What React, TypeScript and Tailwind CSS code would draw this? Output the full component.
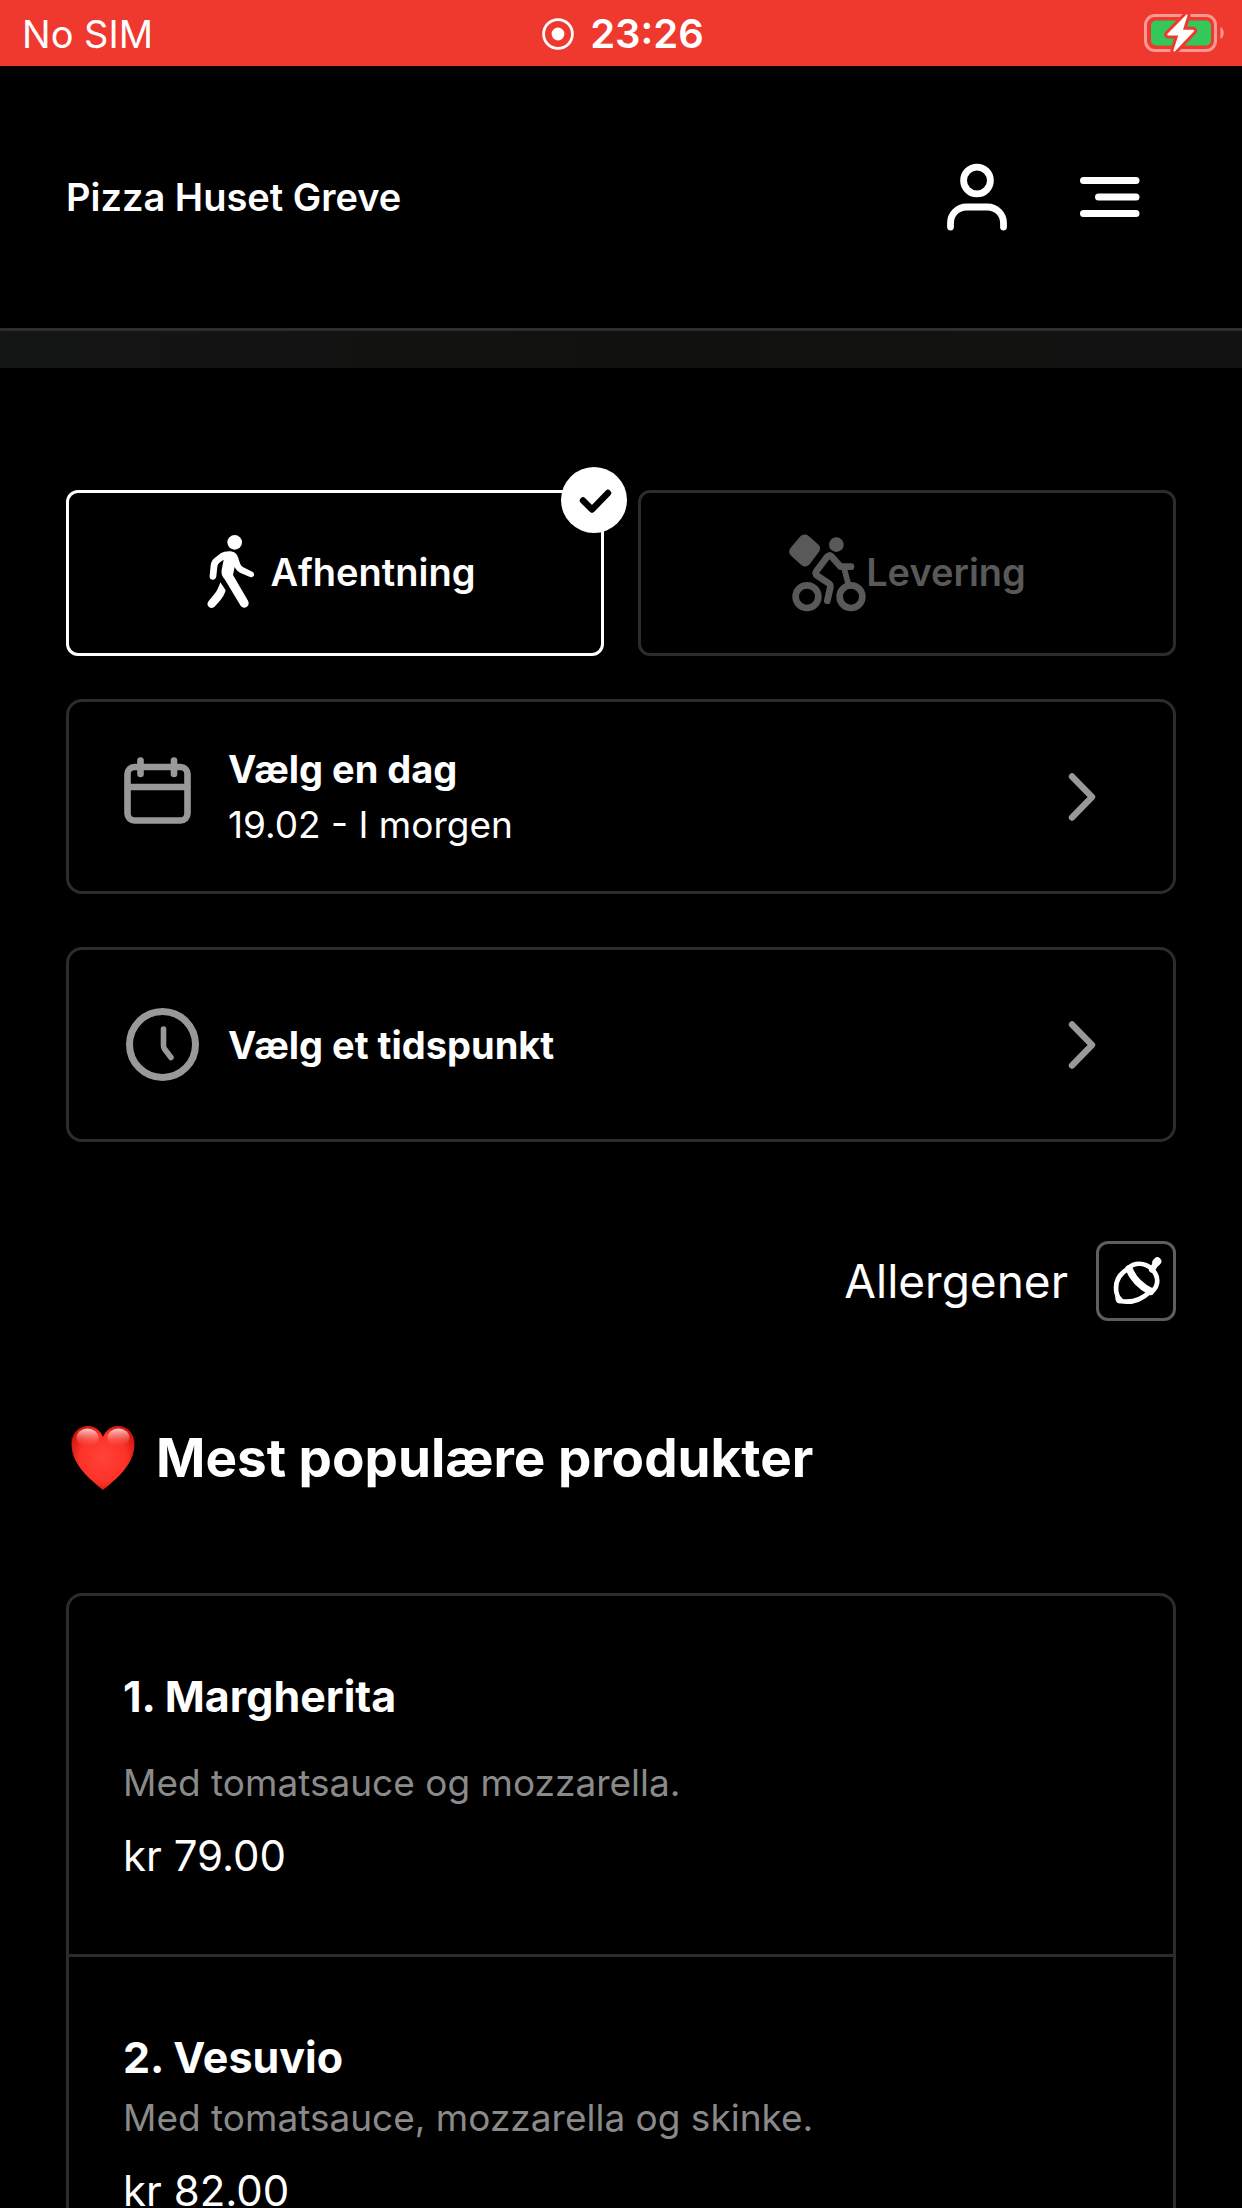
import React from "react";

function RecordIcon() {
  return (
    <svg className="size-8" viewBox="0 0 32 32" aria-hidden="true">
      <circle cx="16" cy="16" r="14.4" fill="none" stroke="#fff" strokeWidth="2.8" />
      <circle cx="16" cy="16" r="6.4" fill="#fff" />
    </svg>
  );
}

function BatteryIcon() {
  return (
    <svg className="h-10 w-20" viewBox="0 0 80 40" role="img" aria-label="Battery charging">
      <rect x="1.5" y="1.5" width="70" height="35" rx="9.5" fill="none" stroke="#f79a94" strokeWidth="3" />
      <path d="M76.5 13v12c2-1 3.2-3.4 3.2-6s-1.2-5-3.2-6z" fill="#f79a94" />
      <rect x="7" y="6.5" width="60" height="25" rx="5" fill="#34c759" />
      <path
        d="M43 0 23.5 19.8c-.6.7-.3 1.7.7 1.7h10L29.5 36c-.5 1.5.8 2 1.8 1L49.8 17.5c.7-.8.3-1.7-.7-1.7H39L43.5 1.500z"
        fill="#fff"
        stroke="#ef392f"
        strokeWidth="6"
        strokeLinejoin="round"
        paintOrder="stroke"
      />
    </svg>
  );
}

function PersonIcon() {
  return (
    <svg className="size-20" viewBox="0 0 80 80" fill="none" stroke="#fff" strokeWidth="6.8" strokeLinecap="round" aria-hidden="true">
      <circle cx="40" cy="23.5" r="13.4" />
      <path d="M13.5 70v-4a16 16 0 0 1 16-16h21a16 16 0 0 1 16 16v4" />
    </svg>
  );
}

function MenuIcon() {
  return (
    <svg className="size-20" viewBox="0 0 80 80" fill="none" stroke="#fff" strokeWidth="7" strokeLinecap="round" aria-hidden="true">
      <path d="M13.5 23.5h52.5M28.5 40h37.5M13.5 56.5h52.5" />
    </svg>
  );
}

function WalkIcon() {
  return (
    <svg className="h-20 w-[60px]" viewBox="18 39 180 240" fill="currentColor" aria-hidden="true">
      <circle cx="137" cy="70" r="22" />
      <path d="M121 97c13 0 22 6 26 18l6 18c2 6 5 9 10 12l27 13c5 3 6 7 5 11-2 5-7 7-12 5l-30-13c-8-4-12-9-16-17l-5 24 45 77c4 7 2 15-4 19-7 4-15 2-19-5l-46-77c-9-10-12-19-10-30l6-30-10 7c-5 4-8 8-9 14l-3 29c-1 7-6 11-12 10-6-1-9-6-8-12l3-31c1-9 4-15 11-21l19-15c7-4 14-6 26-6z" />
      <path d="m94 190 16 24c-3 12-9 21-16 30l-16 18c-5 6-13 7-18 2-6-5-6-12-1-18l19-23c6-7 11-18 16-33z" />
    </svg>
  );
}

function CyclistIcon() {
  return (
    <svg className="h-20 w-[78px]" viewBox="56 39 234 240" aria-hidden="true">
      <path d="M92 53c8-8 19-9 27-1l27 24c8 7 8 16 2 24l-26 34c-8 10-18 11-27 3l-29-26c-8-8-9-17-2-25z" fill="currentColor" />
      <circle cx="201" cy="77" r="22" fill="currentColor" />
      <g fill="none" stroke="currentColor" strokeLinecap="round" strokeLinejoin="round">
        <circle cx="113" cy="233" r="34" strokeWidth="20" />
        <circle cx="245" cy="233" r="34" strokeWidth="20" />
        <path d="M174 245l9-41c1-6 0-8-5-11l-33-22c-7-5-8-9-3-16l31-41c5-6 9-6 14-1l27 30h31" strokeWidth="20" />
        <path d="m225 150 11 42" strokeWidth="17" />
      </g>
    </svg>
  );
}

function CheckIcon() {
  return (
    <svg className="size-[66px]" viewBox="0 0 66 66" aria-hidden="true">
      <circle cx="33" cy="33" r="33" fill="#fff" />
      <path d="m22 33.5 9 9 16-16.5" fill="none" stroke="#000" strokeWidth="6.4" strokeLinecap="round" strokeLinejoin="round" />
    </svg>
  );
}

function CalendarIcon() {
  return (
    <svg className="size-20 shrink-0" viewBox="0 0 80 80" fill="none" stroke="#999" strokeWidth="6.6" strokeLinecap="round" aria-hidden="true">
      <rect x="7.5" y="10" width="60" height="53.5" rx="7" />
      <path d="M8 30h59M20.5 3.5v13.5M54 3.5v13.5" />
    </svg>
  );
}

function ClockIcon() {
  return (
    <svg className="size-20 shrink-0" viewBox="0 0 80 80" fill="none" stroke="#999" strokeLinecap="round" strokeLinejoin="round" aria-hidden="true">
      <circle cx="42.5" cy="39.5" r="33" strokeWidth="7" />
      <path d="M43.5 24v16.5c0 1.5.3 2.5 1.2 3.8l6.3 8.2" strokeWidth="5.6" />
    </svg>
  );
}

function ChevronIcon() {
  return (
    <svg className="ml-auto h-[50px] w-7 shrink-0" viewBox="0 0 28 50" fill="none" stroke="#999" strokeWidth="6.4" strokeLinecap="round" strokeLinejoin="round" aria-hidden="true">
      <path d="m4 4.5 20 20.5-20 20.5" />
    </svg>
  );
}

function AcornIcon() {
  return (
    <svg className="size-[60px]" viewBox="48 63 180 180" fill="none" stroke="#fff" strokeLinecap="round" strokeLinejoin="round" aria-hidden="true">
      <path d="M113 117c-27 16-38 40-34 68 3 10 4 15 4 20 0 6 2 9 8 8 33 7 62-3 89-28" strokeWidth="14" />
      <path d="M84 196v18h16z" fill="#fff" strokeWidth="7" />
      <path d="M114 115c18-18 50-19 71 2 20 19 24 49 1 67" strokeWidth="14" />
      <path d="M117 116c10 26 34 53 65 68" strokeWidth="22" />
      <path d="M186 119l16-25" strokeWidth="18" />
      <path d="M199 97l3-3" strokeWidth="24" />
    </svg>
  );
}

function HeartIcon() {
  return (
    <svg className="size-[66px] shrink-0" viewBox="0 0 66 66" aria-hidden="true">
      <defs>
        <radialGradient id="heart-body" cx="0.5" cy="0.5" r="0.62">
          <stop offset="0" stopColor="#ff4339" />
          <stop offset="0.6" stopColor="#fc3228" />
          <stop offset="1" stopColor="#c80d05" />
        </radialGradient>
        <linearGradient id="heart-shine" x1="0" y1="0" x2="0" y2="1">
          <stop offset="0" stopColor="#fff" stopOpacity="0.8" />
          <stop offset="1" stopColor="#ff6a60" stopOpacity="0" />
        </linearGradient>
      </defs>
      <path d="M33 65C25 58 1.5 42 1.5 19 1.5 9 8 1 18 1c7 0 12 4 15 11C36 5 41 1 48 1c10 0 16.5 8 16.5 18 0 23-23.5 39-31.5 46z" fill="url(#heart-body)" />
      <ellipse cx="17.5" cy="12.5" rx="11" ry="9" fill="url(#heart-shine)" />
      <ellipse cx="48.5" cy="12.5" rx="11" ry="9" fill="url(#heart-shine)" />
    </svg>
  );
}

type PickerProps = { icon: React.ReactNode; title: string; value?: string };

function PickerButton({ icon, title, value }: PickerProps) {
  return (
    <button
      type="button"
      className="flex min-h-[195px] w-full items-center rounded-2xl border-3 border-[#2c2c2c] pr-[77px] pl-[51px] text-left text-[37px] leading-[56px]"
    >
      {icon}
      <span className="ml-7 flex flex-col">
        <span className="text-[38px] font-bold">{title}</span>
        {value && <span>{value}</span>}
      </span>
      <ChevronIcon />
    </button>
  );
}

type Product = { name: string; description: string; price: string; spaced?: boolean };

const products: Product[] = [
  { name: "1. Margherita", description: "Med tomatsauce og mozzarella.", price: "kr 79.00", spaced: true },
  { name: "2. Vesuvio", description: "Med tomatsauce, mozzarella og skinke.", price: "kr 82.00" },
];

function ProductRow({ product }: { product: Product }) {
  return (
    <li className="px-[54px] pt-[72px] pb-[70px]">
      <h3 className="text-[43px] leading-[56px] font-bold">{product.name}</h3>
      <p className={`text-[37px] leading-[50px] text-[#8a8a8a] ${product.spaced ? "mt-[34px]" : "mt-2"}`}>
        {product.description}
      </p>
      <p className="mt-5 text-[42px] leading-[56px]">{product.price}</p>
    </li>
  );
}

export default function App() {
  return (
    <div className="flex h-screen flex-col bg-black font-[Inter,sans-serif] text-white">
      <div className="grid h-[66px] shrink-0 grid-cols-[1fr_auto_1fr] items-center bg-[#ef392f] pt-0.5 pr-[18px] pl-[22px]">
        <span className="text-[38px] leading-[48px]">No SIM</span>
        <div className="flex items-center gap-4">
          <RecordIcon />
          <span className="text-[40px] leading-[48px] font-semibold">23:26</span>
        </div>
        <div className="flex justify-end">
          <BatteryIcon />
        </div>
      </div>

      <header className="flex h-[265px] shrink-0 items-center border-b-3 border-[#2e2e2e] pr-[92px] pl-[66px]">
        <a href="#top" className="text-[38px] leading-[50px] font-semibold">
          Pizza Huset Greve
        </a>
        <div className="ml-auto flex gap-[53px]">
          <button type="button" aria-label="Profil">
            <PersonIcon />
          </button>
          <button type="button" aria-label="Menu">
            <MenuIcon />
          </button>
        </div>
      </header>

      <main className="min-h-0 grow overflow-y-auto [scrollbar-width:none]">
        <div className="h-[37px] bg-linear-to-r from-[#141515] via-[#11110f] to-[#121212]" />

        <div className="px-[66px] pt-[122px]">
          <div className="grid grid-cols-2 gap-[34px] text-[38px] leading-[50px] font-semibold">
            <button
              type="button"
              aria-pressed="true"
              className="relative flex h-[166px] items-center justify-center gap-4 rounded-xl border-3 border-white pb-0.5"
            >
              <WalkIcon />
              <span>Afhentning</span>
              <span className="absolute -top-[26px] -right-[26px]">
                <CheckIcon />
              </span>
            </button>
            <button
              type="button"
              aria-pressed="false"
              className="flex h-[166px] items-center justify-center rounded-xl border-3 border-[#2c2c2c] pb-0.5 text-[#595959]"
            >
              <CyclistIcon />
              <span>Levering</span>
            </button>
          </div>

          <div className="mt-[43px] flex flex-col gap-[53px]">
            <PickerButton icon={<CalendarIcon />} title="Vælg en dag" value="19.02 - I morgen" />
            <PickerButton icon={<ClockIcon />} title="Vælg et tidspunkt" />
          </div>

          <div className="mt-[99px] flex items-center justify-end gap-7">
            <span id="allergens" className="text-[46px] leading-[60px]">
              Allergener
            </span>
            <button
              type="button"
              aria-labelledby="allergens"
              className="flex size-20 items-center justify-center rounded-xl border-3 border-[#5e5e5e]"
            >
              <AcornIcon />
            </button>
          </div>

          <h2 className="mt-[104px] flex items-center gap-5 pl-1 text-[53px] leading-[66px] font-bold">
            <HeartIcon />
            Mest populære produkter
          </h2>

          <ul className="mt-[102px] divide-y-3 divide-[#2c2c2c] rounded-2xl border-3 border-[#2c2c2c]">
            {products.map((product) => (
              <ProductRow key={product.name} product={product} />
            ))}
          </ul>
        </div>
      </main>
    </div>
  );
}
